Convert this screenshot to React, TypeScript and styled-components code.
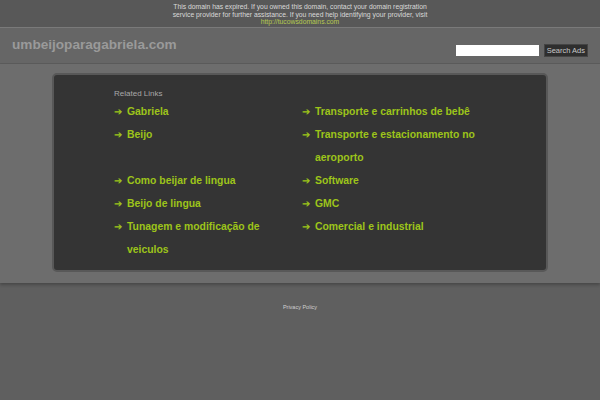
import React from 'react';
import styled, { createGlobalStyle } from 'styled-components';

const GlobalStyle = createGlobalStyle`
  html, body {
    margin: 0;
    padding: 0;
    background: #5f5f5f;
    font-family: "Liberation Sans", Arial, sans-serif;
  }
`;

const Notice = styled.div`
  height: 28px;
  box-sizing: border-box;
  padding-top: 3px;
  background: #585858;
  border-bottom: 1px solid #7a7a7a;
  text-align: center;
  font-size: 6.8px;
  line-height: 7.6px;
  color: #d8d8d8;

  p {
    margin: 0;
  }

  a {
    color: #b4c850;
    text-decoration: none;
  }
`;

const Header = styled.div`
  height: 36px;
  box-sizing: border-box;
  display: flex;
  align-items: center;
  justify-content: space-between;
  padding: 0 12px 0 12px;
  background: #666;
  border-bottom: 1px solid #5c5c5c;
`;

const Domain = styled.div`
  font-size: 13.6px;
  font-weight: bold;
  color: #9a9a9a;
  margin-top: -2px;
`;

const SearchForm = styled.form`
  display: flex;
  align-items: center;
  gap: 5px;
  margin-top: 10px;
`;

const SearchInput = styled.input`
  width: 83px;
  height: 11px;
  box-sizing: border-box;
  border: none;
  padding: 0;
  background: #fff;
`;

const SearchButton = styled.button`
  height: 13px;
  padding: 0 2px;
  border: 1px solid #444;
  background: #2e2e2e;
  color: #c8c8c8;
  font-family: "Liberation Sans", Arial, sans-serif;
  font-size: 7.5px;
  line-height: 11px;
`;

const Band = styled.div`
  background: #6d6d6d;
  padding: 9px 52px 11px;
  box-shadow: 0 2px 3px rgba(0, 0, 0, 0.25);
`;

const Panel = styled.div`
  background: #343434;
  border: 2px solid #585858;
  border-radius: 5px;
  padding: 14px 0 16px 60px;
  height: 199px;
  box-sizing: border-box;
`;

const Title = styled.div`
  font-size: 8px;
  color: #a8a8a8;
  margin-bottom: 2px;
`;

const Columns = styled.div`
  display: grid;
  grid-template-columns: 188px 188px;
`;

const List = styled.ul`
  list-style: none;
  margin: 0;
  padding: 0;
`;

const Item = styled.li`
  display: flex;
  font-size: 10.4px;
  font-weight: bold;
  line-height: 23px;
  color: #9dc41a;
`;

const Arrow = styled.span`
  width: 13px;
  flex-shrink: 0;
  font-weight: normal;
`;

const Footer = styled.div`
  text-align: center;
  padding-top: 21px;
  font-size: 5.5px;

  a {
    color: #d0d0d0;
  }
`;

const left = [
  'Gabriela',
  'Beijo',
  '',
  'Como beijar de lingua',
  'Beijo de lingua',
  'Tunagem e modificação de veiculos',
];

const right = [
  'Transporte e carrinhos de bebê',
  'Transporte e estacionamento no aeroporto',
  'Software',
  'GMC',
  'Comercial e industrial',
];

const LinkList: React.FC<{ items: string[] }> = ({ items }) => (
  <List>
    {items.map((t, i) =>
      t ? (
        <Item key={i}>
          <Arrow>➔</Arrow>
          <span>{t}</span>
        </Item>
      ) : (
        <Item key={i}>&nbsp;</Item>
      )
    )}
  </List>
);

export default function App() {
  return (
    <>
      <GlobalStyle />
      <Notice>
        <p>This domain has expired. If you owned this domain, contact your domain registration</p>
        <p>service provider for further assistance. If you need help identifying your provider, visit</p>
        <p>
          <a href="#">http://tucowsdomains.com</a>
        </p>
      </Notice>
      <Header>
        <Domain>umbeijoparagabriela.com</Domain>
        <SearchForm onSubmit={(e) => e.preventDefault()}>
          <SearchInput type="text" />
          <SearchButton type="submit">Search Ads</SearchButton>
        </SearchForm>
      </Header>
      <Band>
        <Panel>
          <Title>Related Links</Title>
          <Columns>
            <LinkList items={left} />
            <LinkList items={right} />
          </Columns>
        </Panel>
      </Band>
      <Footer>
        <a href="#">Privacy Policy</a>
      </Footer>
    </>
  );
}
